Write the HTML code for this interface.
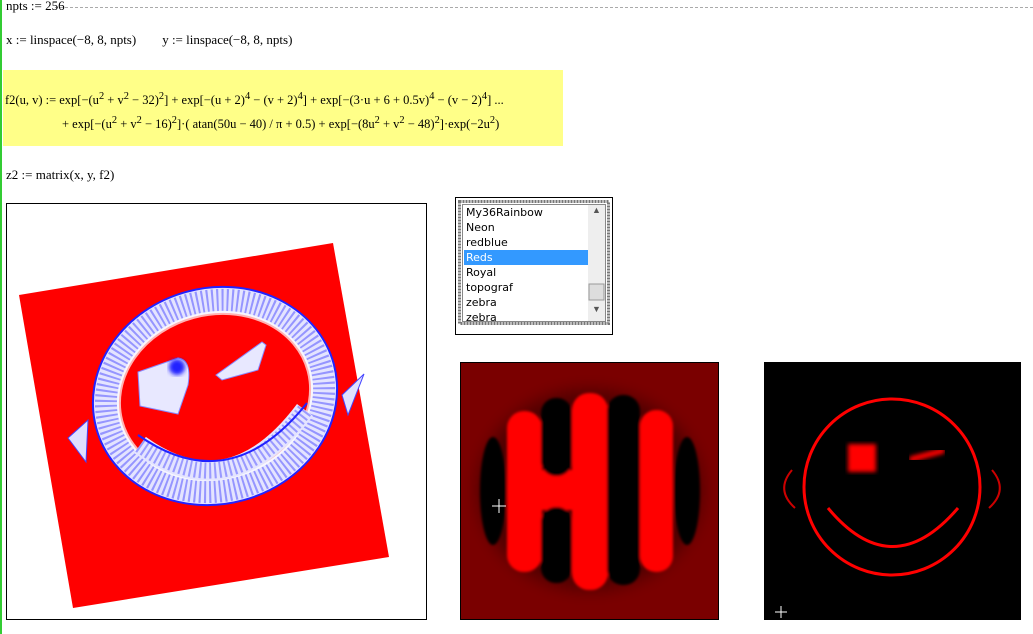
<!DOCTYPE html>
<html><head><meta charset="utf-8"><style>
body{margin:0;width:1033px;height:634px;background:#fff;position:relative;overflow:hidden;font-family:"Liberation Serif",serif;font-size:13px;color:#000}
.t{position:absolute;white-space:nowrap}
</style></head><body>
<div style="position:absolute;left:0;top:0;width:2px;height:634px;background:#3c3"></div>
<div style="position:absolute;left:55px;top:7px;width:978px;border-top:1px dashed #aaa"></div>
<div class="t" style="left:6px;top:-2px">npts := 256</div>
<div class="t" style="left:6px;top:32px">x := linspace(−8, 8, npts)&nbsp;&nbsp;&nbsp;&nbsp;&nbsp;&nbsp;&nbsp;&nbsp;y := linspace(−8, 8, npts)</div>
<div style="position:absolute;left:3px;top:70px;width:560px;height:76px;background:#ffff88"></div>
<div class="t" style="left:5px;top:91px;font-size:12.5px">f2(u, v) := exp[−(u<sup>2</sup> + v<sup>2</sup> − 32)<sup>2</sup>] + exp[−(u + 2)<sup>4</sup> − (v + 2)<sup>4</sup>] + exp[−(3·u + 6 + 0.5v)<sup>4</sup> − (v − 2)<sup>4</sup>] ...</div>
<div class="t" style="left:62px;top:115px;font-size:12.5px">+ exp[−(u<sup>2</sup> + v<sup>2</sup> − 16)<sup>2</sup>]·( atan(50u − 40) / π + 0.5) + exp[−(8u<sup>2</sup> + v<sup>2</sup> − 48)<sup>2</sup>]·exp(−2u<sup>2</sup>)</div>
<div class="t" style="left:6px;top:167px">z2 := matrix(x, y, f2)</div>

<svg style="position:absolute;left:0;top:0" width="1033" height="634">
<defs>
<filter id="b4"><feGaussianBlur stdDeviation="8"/></filter>
<filter id="b1"><feGaussianBlur stdDeviation="1.2"/></filter>
<filter id="b2"><feGaussianBlur stdDeviation="2"/></filter>
</defs>
<rect x="6.5" y="203.5" width="420" height="416" fill="#fff" stroke="#000"/>
<polygon points="19,295 333,243 389,557 73,608" fill="#f00"/>
<g fill="none">
<ellipse cx="215" cy="396" rx="110" ry="95" transform="rotate(-15 215 396)" stroke="#e4e4ff" stroke-width="26"/>
<ellipse cx="215" cy="396" rx="110" ry="95" transform="rotate(-15 215 396)" stroke="#6060ff" stroke-width="22" stroke-dasharray="2 3" opacity=".6"/>
<ellipse cx="215" cy="396" rx="123" ry="108" transform="rotate(-15 215 396)" stroke="#22f" stroke-width="2"/>
<ellipse cx="215" cy="396" rx="97" ry="82" transform="rotate(-15 215 396)" stroke="#fff" stroke-width="4" opacity=".7"/>
<path d="M140,445 Q230,510 305,410" stroke="#e4e4ff" stroke-width="20"/>
<path d="M140,445 Q230,510 305,410" stroke="#5050ff" stroke-width="16" stroke-dasharray="2 3" opacity=".5"/>
<path d="M138,435 Q230,500 307,403" stroke="#22f" stroke-width="2"/>
</g>
<path d="M138,372 L178,358 Q192,360 188,385 L178,414 L140,406Z" fill="#e8e8ff" stroke="#88f"/>
<circle cx="177" cy="367" r="8" fill="#22f" filter="url(#b2)"/>
<path d="M216,375 L262,342 L266,345 L258,370 L222,380Z" fill="#e8e8ff" stroke="#88f"/>
<path d="M68,438 L88,420 L86,462Z" fill="#e0e0ff" stroke="#44f"/>
<path d="M342,395 L364,374 L348,415Z" fill="#e0e0ff" stroke="#44f"/>

<rect x="460.5" y="362.5" width="258" height="257" fill="#7a0000" stroke="#000"/>
<g filter="url(#b4)">
<ellipse cx="590" cy="490" rx="112" ry="100" fill="#000" opacity=".35"/>
</g>
<g filter="url(#b1)">
<ellipse cx="493" cy="491" rx="13" ry="54" fill="#000"/>
<rect x="507" y="411" width="35" height="161" rx="17" fill="#f00"/>
<rect x="540" y="470" width="40" height="40" fill="#f00"/>
<rect x="541" y="398" width="31" height="78" rx="15" fill="#000"/>
<rect x="541" y="507" width="31" height="76" rx="15" fill="#000"/>
<rect x="572" y="393" width="36" height="197" rx="17" fill="#f00"/>
<rect x="607" y="395" width="33" height="190" rx="16" fill="#000"/>
<rect x="640" y="410" width="33" height="162" rx="16" fill="#f00"/>
<ellipse cx="687" cy="491" rx="13" ry="54" fill="#000"/>
</g>
<path d="M492,506h14M499,499v14" stroke="#fff"/>
<rect x="764.5" y="362.5" width="256" height="257" fill="#000" stroke="#000"/>
<circle cx="892" cy="487" r="88" fill="none" stroke="#f00" stroke-width="3"/>
<path d="M828,508 Q892,585 958,508" fill="none" stroke="#f00" stroke-width="3"/>
<rect x="848" y="444" width="28" height="28" fill="#f00" filter="url(#b2)"/>
<path d="M912,459 L942,451" stroke="#f00" stroke-width="6" stroke-linecap="round" filter="url(#b2)"/>
<path d="M792,470 Q775,490 795,508" fill="none" stroke="#c00" stroke-width="2"/>
<path d="M992,470 Q1009,490 989,508" fill="none" stroke="#c00" stroke-width="2"/>
<path d="M775,612h12M781,606v12" stroke="#fff"/>
<rect x="455.5" y="197.5" width="157" height="137" fill="#fff" stroke="#000"/>
<rect x="459.5" y="201.5" width="149" height="122" fill="none" stroke="#777" stroke-dasharray="2 1" stroke-width="3"/>
<rect x="462.5" y="204.5" width="143" height="117" fill="#fff" stroke="#888"/>
<rect x="588" y="205" width="17" height="116" fill="#eee"/>
<rect x="589" y="284" width="15" height="16" fill="#ddd" stroke="#999"/>
<rect x="464" y="250" width="124" height="15" fill="#3399ff"/>
</svg>
<div style="position:absolute;left:466px;top:205px;font-family:'DejaVu Sans',sans-serif;font-size:11px;line-height:15px;height:116px;overflow:hidden">
My36Rainbow<br>Neon<br>redblue<br><span style="color:#fff">Reds</span><br>Royal<br>topograf<br>zebra<br>zebra</div>
<div class="t" style="left:592px;top:205px;font-size:9px;color:#555">▲</div>
<div class="t" style="left:592px;top:304px;font-size:9px;color:#555">▼</div>
</body></html>
